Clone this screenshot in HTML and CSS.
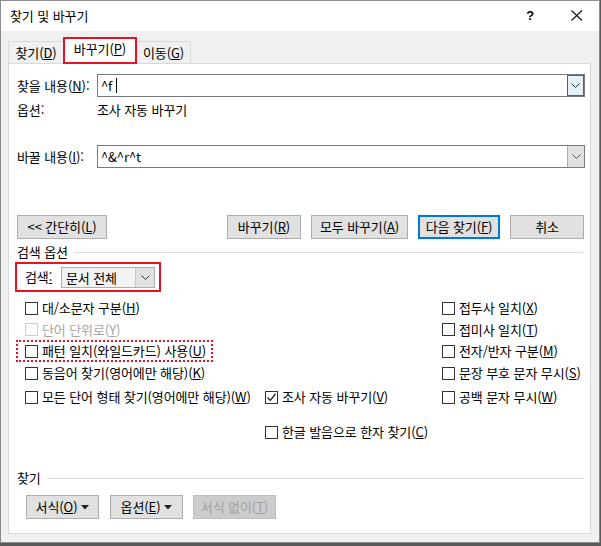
FILE: index.html
```html
<!DOCTYPE html>
<html lang="ko">
<head>
<meta charset="utf-8">
<title>찾기 및 바꾸기</title>
<link rel="stylesheet" href="styles.css">
</head>
<body>
<div class="window">
  <div class="titlebar">
    <span class="title">찾기 및 바꾸기</span>
    <span class="help">?</span>
    <span class="close"><svg width="12" height="11" viewBox="0 0 12 11"><path d="M0.5 0.5 L11 10.5 M11 0.5 L0.5 10.5" stroke="#111" stroke-width="1.1" fill="none"/></svg></span>
  </div>
  <div class="client">
    <div class="tabs">
      <div class="tab first">찾기(<u>D</u>)</div>
      <div class="tab active">바꾸기(<u>P</u>)</div>
      <div class="tab last">이동(<u>G</u>)</div>
    </div>
    <div class="panel">
      <div class="row field-row">
        <span class="label">찾을 내용(<u>N</u>):</span>
        <div class="combo">
          <span class="combo-text">^f<span class="caret"></span></span>
          <span class="drop focus"><svg width="9" height="5" viewBox="0 0 9 5"><path d="M0.5 0.5 L4.5 4.5 L8.5 0.5" stroke="#222" fill="none"/></svg></span>
        </div>
      </div>
      <div class="row opt-row">
        <span class="label">옵션:</span>
        <span>조사 자동 바꾸기</span>
      </div>
      <div class="row field-row replace-row">
        <span class="label">바꿀 내용(<u>I</u>):</span>
        <div class="combo">
          <span class="combo-text">^&amp;^r^t</span>
          <span class="drop"><svg width="9" height="5" viewBox="0 0 9 5"><path d="M0.5 0.5 L4.5 4.5 L8.5 0.5" stroke="#555" fill="none"/></svg></span>
        </div>
      </div>
      <div class="row btn-row">
        <button class="btn w-less">&lt;&lt; 간단히(<u>L</u>)</button>
        <div class="btn-group">
          <button class="btn w-rep">바꾸기(<u>R</u>)</button>
          <button class="btn w-all">모두 바꾸기(<u>A</u>)</button>
          <button class="btn w-next default">다음 찾기(<u>F</u>)</button>
          <button class="btn w-cancel">취소</button>
        </div>
      </div>
      <div class="group-head search-head"><span>검색 옵션</span><span class="rule"></span></div>
      <div class="search-box">
        <span class="search-label">검색<u>:</u></span>
        <div class="select">
          <span class="select-text">문서 전체</span>
          <span class="select-drop"><svg width="9" height="5" viewBox="0 0 9 5"><path d="M0.5 0.5 L4.5 4.5 L8.5 0.5" stroke="#333" fill="none"/></svg></span>
        </div>
      </div>
      <div class="checks">
        <label class="chk c1 r1"><span class="box"></span>대/소문자 구분(<u>H</u>)</label>
        <label class="chk c3 r1"><span class="box"></span>접두사 일치(<u>X</u>)</label>
        <label class="chk c1 r2 disabled"><span class="box"></span>단어 단위로(<u>Y</u>)</label>
        <label class="chk c3 r2"><span class="box"></span>접미사 일치(<u>T</u>)</label>
        <label class="chk c1 r3 dotted"><span class="box"></span>패턴 일치(와일드카드) 사용(<u>U</u>)</label>
        <label class="chk c3 r3"><span class="box"></span>전자/반자 구분(<u>M</u>)</label>
        <label class="chk c1 r4"><span class="box"></span>동음어 찾기(영어에만 해당)(<u>K</u>)</label>
        <label class="chk c3 r4"><span class="box"></span>문장 부호 문자 무시(<u>S</u>)</label>
        <label class="chk c1 r5"><span class="box"></span>모든 단어 형태 찾기(영어에만 해당)(<u>W</u>)</label>
        <label class="chk c2 r5"><span class="box checked"><svg width="11" height="11" viewBox="0 0 11 11"><path d="M1.5 5.5 L4.3 8.3 L9.5 2" stroke="#111" stroke-width="1.2" fill="none"/></svg></span>조사 자동 바꾸기(<u>V</u>)</label>
        <label class="chk c3 r5"><span class="box"></span>공백 문자 무시(<u>W</u>)</label>
        <label class="chk c2 r6"><span class="box"></span>한글 발음으로 한자 찾기(<u>C</u>)</label>
      </div>
      <div class="group-head find-head"><span>찾기</span><span class="rule"></span></div>
      <div class="bottom-btns">
        <button class="btn w-fmt">서식(<u>O</u>)<svg class="tri" width="8" height="5" viewBox="0 0 8 5"><path d="M0 0 L8 0 L4 4.5 Z" fill="#222"/></svg></button>
        <button class="btn w-opt">옵션(<u>E</u>)<svg class="tri" width="8" height="5" viewBox="0 0 8 5"><path d="M0 0 L8 0 L4 4.5 Z" fill="#222"/></svg></button>
        <button class="btn w-nofmt" disabled>서식 없이(<u>T</u>)</button>
      </div>
    </div>
  </div>
</div>
</body>
</html>
```

FILE: styles.css
```css
* { box-sizing: border-box; }
html, body { margin: 0; padding: 0; }
body {
  width: 601px;
  height: 546px;
  overflow: hidden;
  background: #5a5a5a;
  font-family: "Noto Sans CJK KR", "Noto Sans", sans-serif;
  font-size: 13px;
  color: #000;
  letter-spacing: -0.1px;
}
u { text-decoration: underline; text-underline-offset: 1px; text-decoration-thickness: 1px; }

.window {
  width: 600px;
  height: 543px;
  border: 1px solid #8d8d8d;
  background: #f0f0f0;
  display: flex;
  flex-direction: column;
}
.titlebar {
  height: 30px;
  background: #fff;
  display: flex;
  align-items: center;
  padding-left: 9px;
  flex: none;
}
.title { line-height: 16px; margin-top: -1px; }
.help { margin-left: auto; font-size: 13px; font-weight: 600; font-family: "Liberation Sans", sans-serif; margin-right: 37px; margin-top: -1px; }
.close { width: 12px; height: 11px; margin-right: 16px; display: flex; margin-top: -1px; }

.client { flex: 1; padding: 6px 0 0 7px; }
.tabs { display: flex; align-items: flex-end; height: 26px; }
.tab {
  height: 22px;
  background: #f0f0f0;
  border: 1px solid #d9d9d9;
  border-bottom: none;
  display: flex;
  align-items: center;
  justify-content: center;
  line-height: 16px;
  padding-top: 1px;
}
.tab.first { width: 55px; border-right: none; }
.tab.last { width: 54px; border-left: none; }
.tab.active {
  width: 74px;
  height: 27px;
  background: #fff;
  border: 2px solid #e81123;
  margin-bottom: -1px;
  position: relative;
  z-index: 1;
  padding-top: 0;
  padding-bottom: 3px;
}

.panel {
  width: 583px;
  height: 471px;
  background: #fff;
  border: 1px solid #d9d9d9;
  padding: 10px 5px 0 8px;
}
.row { display: flex; align-items: center; }
.label { width: 80px; flex: none; line-height: 16px; }
.field-row { height: 23px; }
.combo {
  width: 488px;
  height: 23px;
  border: 1px solid #7a7a7a;
  display: flex;
  align-items: stretch;
}
.combo-text { flex: 1; padding-left: 3px; line-height: 20px; display: flex; align-items: center; }
.caret { width: 1px; height: 15px; background: #000; margin-left: 4px; }
.drop {
  width: 17px;
  flex: none;
  background: #e1e1e1;
  border-left: 1px solid #adadad;
  display: flex;
  align-items: center;
  justify-content: center;
}
.drop.focus { background: #e5f1fb; border: 1px solid #0078d7; }
.opt-row { height: 16px; margin-top: 5px; line-height: 16px; }
.replace-row { margin-top: 27px; }
.btn-row { margin-top: 47px; justify-content: space-between; padding-right: 1px; }
.btn-group { display: flex; gap: 10px; }
.btn {
  height: 24px;
  background: #e1e1e1;
  border: 1px solid #adadad;
  font: inherit;
  letter-spacing: inherit;
  color: #000;
  padding: 0;
  display: flex;
  align-items: center;
  justify-content: center;
  line-height: 16px;
}
.btn.default { border-color: #0078d7; box-shadow: inset 0 0 0 1px #0078d7; }
.w-less { width: 90px; }
.w-rep { width: 74px; }
.w-all { width: 97px; }
.w-next { width: 82px; }
.w-cancel { width: 74px; }

.group-head { display: flex; align-items: center; height: 16px; line-height: 16px; }
.group-head .rule { flex: 1; border-top: 1px solid #dcdcdc; margin-left: 6px; margin-right: 2px; }
.search-head { margin-top: 5px; }

.search-box {
  margin-top: 2px;
  margin-left: -2px;
  width: 146px;
  height: 30px;
  border: 2px solid #e81123;
  display: flex;
  align-items: center;
  padding-left: 8px;
}
.search-label { width: 36px; line-height: 16px; }
.select {
  width: 94px;
  height: 21px;
  border: 1px solid #adadad;
  background: #f2f2f2;
  display: flex;
}
.select-text { flex: 1; padding-left: 4px; line-height: 19px; }
.select-drop { width: 19px; border-left: 1px solid #c8c8c8; background: #e1e1e1; display: flex; align-items: center; justify-content: center; }

.checks {
  margin-top: 5px;
  padding-left: 8px;
  display: grid;
  grid-template-columns: 240px 177px 1fr;
  grid-template-rows: 22px 21px 22px 22px 26px 33px;
}
.chk { display: flex; align-items: center; line-height: 16px; white-space: nowrap; }
.c1 { grid-column: 1; }
.c2 { grid-column: 2; }
.c3 { grid-column: 3; }
.r1 { grid-row: 1; }
.r2 { grid-row: 2; }
.r3 { grid-row: 3; }
.r4 { grid-row: 4; }
.r5 { grid-row: 5; }
.r6 { grid-row: 6; align-self: end; height: 22px; }
.box {
  width: 13px;
  height: 13px;
  border: 1px solid #333;
  background: #fff;
  margin-right: 4px;
  flex: none;
  display: flex;
  align-items: center;
  justify-content: center;
}
.chk.disabled { color: #a6a6a6; }
.chk.disabled .box { border-color: #cccccc; }
.chk.dotted {
  margin-left: -9px;
  padding-left: 7px;
  width: 197px;
  border: 2px dotted #e81123;
}

.find-head { margin-top: 27px; }
.bottom-btns { display: flex; margin-top: 9px; padding-left: 9px; gap: 11px; }
.w-fmt { width: 73px; }
.w-opt { width: 73px; margin-right: -1px; }
.w-nofmt { width: 83px; background: #cccccc; border-color: #bfbfbf; color: #a0a0a0; }
.tri { margin-left: 4px; }
```
